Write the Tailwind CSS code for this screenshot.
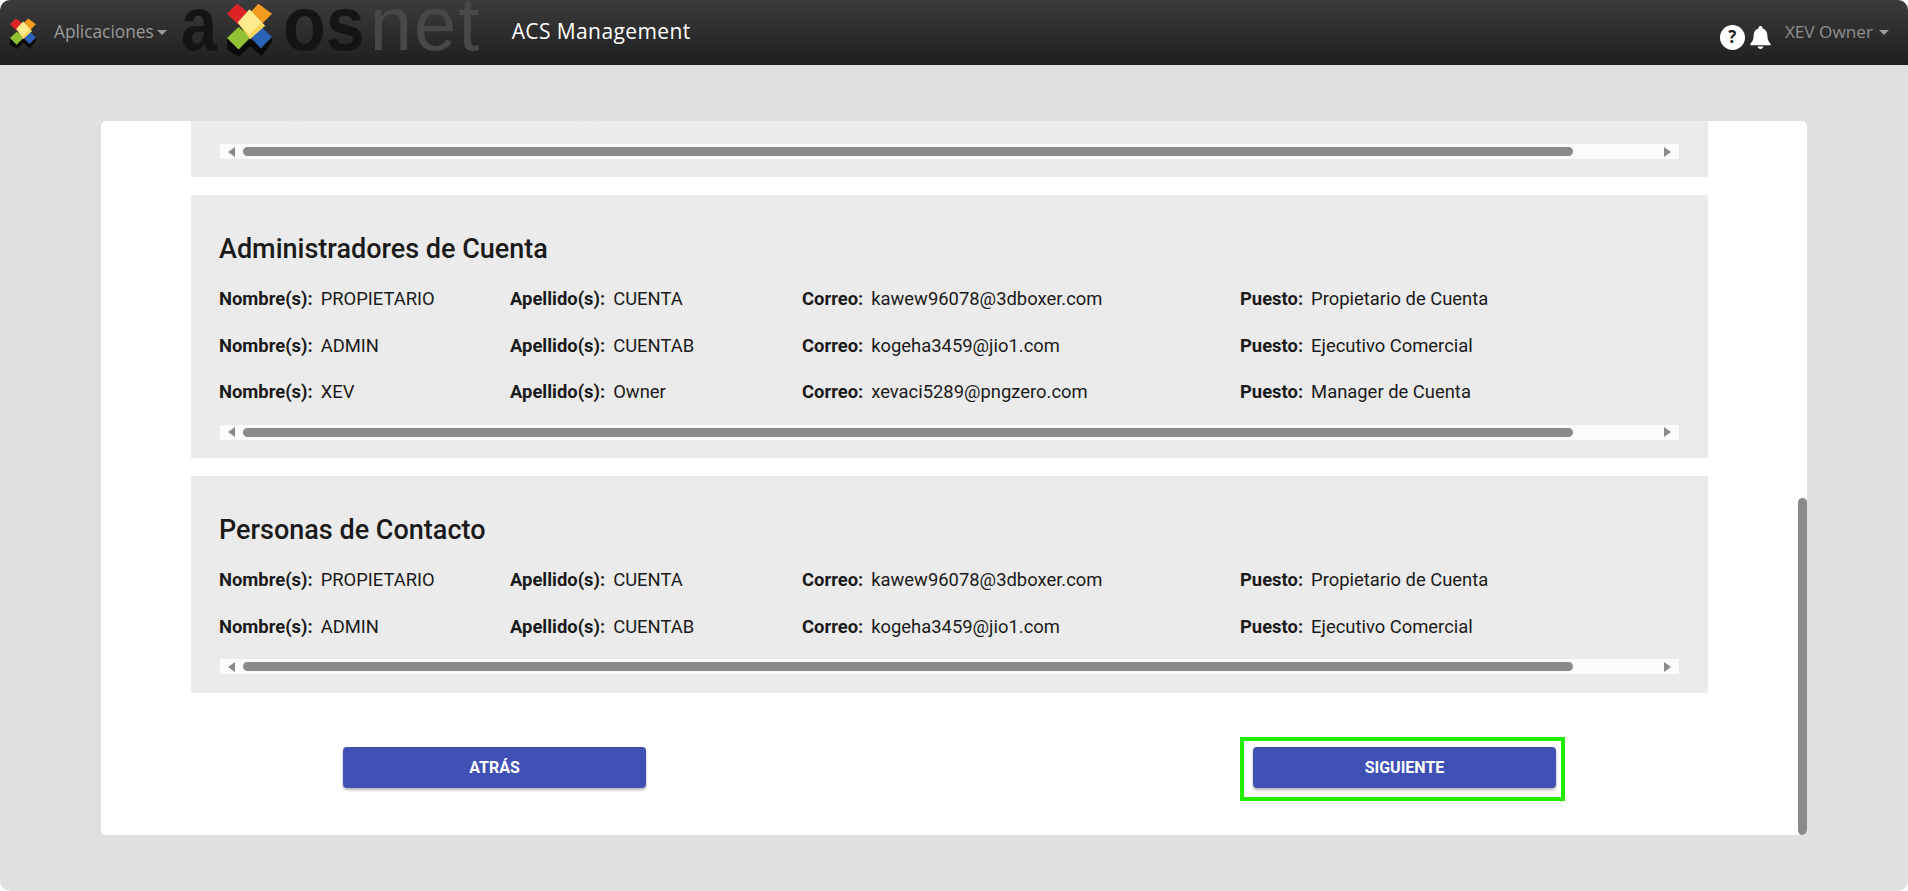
<!DOCTYPE html>
<html lang="es">
<head>
    <meta charset="UTF-8">
    <title>ACS Management</title>
    <script src="https://cdn.jsdelivr.net/npm/@tailwindcss/browser@4"></script>
</head>
<body class="h-screen overflow-hidden bg-white font-['Roboto',sans-serif] text-[18.4px] text-[#1a1a1a]">
<svg class="hidden">
    <symbol id="logo-x" viewBox="160 10 136 162">
        <path fill="#0a0a0a" d="M160 115L195 150L230 118L262 146L296 112V128L262 172V168L230 140L196 172L160 150Z"/>
        <path fill="#dc2427" d="M190 12L160 42L195 76L228 40Z"/>
        <path fill="#f49c1e" d="M255 12L228 40L262 76L296 42Z"/>
        <path fill="#8fc132" d="M195 82L160 115L195 150L232 112Z"/>
        <path fill="#2a62b8" d="M262 80L232 113L262 146L296 112Z"/>
        <path fill="#fdeb8e" d="M228 28L192 68L230 118L275 78Z"/>
        <path fill="#f6c93c" d="M230 118L275 78L262 70L228 104L200 78L192 68Z" opacity=".6"/>
    </symbol>
</svg>
<div class="h-full rounded-[10px] overflow-hidden bg-[#e0e0e0] flex flex-col">
    <header class="h-[65px] flex items-center bg-gradient-to-b from-[#3c3c3c] to-[#1f1f1f] font-['Open_Sans',sans-serif]">
        <svg class="w-[26px] h-[31px] ml-[10px] mt-[1px]"><use href="#logo-x"/></svg>
        <a class="ml-[18px] -mt-[1px] flex items-center text-[17.3px] text-[#9a9a9a]">Aplicaciones<span class="ml-[3px] border-x-[5px] border-x-transparent border-t-[5px] border-t-[#9a9a9a]"></span></a>
        <div class="relative ml-[14px] w-[301px] h-[65px] flex items-baseline leading-[47px] blur-[0.5px] font-['Liberation_Sans',sans-serif]">
            <span class="inline-block origin-left scale-x-[0.85] text-[76px] font-bold text-[#141414]">a</span>
            <span class="inline-block origin-left scale-x-[0.92] ml-[60px] text-[76px] font-bold text-[#141414]">os</span>
            <span class="-ml-[2px] text-[76px] tracking-[2px] text-[#484848]">net</span>
            <svg class="absolute left-[46px] top-[3px] w-[45px] h-[54px]"><use href="#logo-x"/></svg>
        </div>
        <span class="ml-[30px] -mt-[1px] text-[21px] tracking-[0.4px] text-white">ACS Management</span>
        <div class="ml-auto flex items-center pr-[19px]">
            <span class="mt-[9px] w-[25px] h-[25px] rounded-full bg-white flex items-center justify-center text-[17px] font-bold text-[#222222]">?</span>
            <svg class="ml-[5px] mt-[9px] w-[21px] h-[23px]" viewBox="0 0 21 23" fill="#ffffff"><path d="M10.5 0C9.3 0 8.5.9 8.5 2v.6C5.3 3.5 3.6 6.3 3.6 9.6c0 4.300-1.200 5.900-3.100 8.100-.5.6-.1 1.600.7 1.600h18.600c.8 0 1.200-1 .7-1.600-1.900-2.200-3.100-3.800-3.100-8.100 0-3.300-1.700-6.100-4.900-7V2c0-1.100-.8-2-2-2zM7.600 20.500c.2 1.400 1.400 2.500 2.900 2.500s2.700-1.100 2.900-2.500z"/></svg>
            <span class="ml-[14px] -mt-[1px] text-[17.2px] text-[#8f8f8f]">XEV Owner</span>
            <span class="ml-[6px] -mt-[1px] border-x-[5px] border-x-transparent border-t-[5px] border-t-[#9a9a9a]"></span>
        </div>
    </header>

    <main class="flex-1 pt-[56px] pl-[101px]">
        <div class="relative w-[1706px] h-[714px] rounded-[5px] bg-white overflow-hidden">
            <div class="ml-[90px] w-[1517px] h-[56px] bg-[#ebebeb] px-[29px] overflow-hidden">
                <div class="-mt-[33.5px] h-[46.5px] grid grid-cols-[290px_292px_438px_1fr] items-center">
                    <div class="-ml-px"><b class="mr-[8px]">Nombre(s):</b>PROPIETARIO</div>
                    <div><b class="mr-[8px]">Apellido(s):</b>CUENTA</div>
                </div>
                <div class="mt-[10px] h-[15px] bg-[#fbfbfb] flex items-center">
                    <span class="ml-[8px] border-y-[5px] border-y-transparent border-r-[7px] border-r-[#8a8a8a]"></span>
                    <span class="ml-[8px] w-[1330px] h-[9px] rounded-full bg-[#8a8a8a]"></span>
                    <span class="ml-auto mr-[8px] border-y-[5px] border-y-transparent border-l-[7px] border-l-[#8a8a8a]"></span>
                </div>
            </div>

            <section class="mt-[18px] ml-[90px] w-[1517px] h-[263px] bg-[#ebebeb] px-[29px]">
                <h2 class="-ml-px pt-[34px] h-[81px] text-[27px] font-medium leading-[40px]">Administradores de Cuenta</h2>
                <div class="h-[46.5px] grid grid-cols-[290px_292px_438px_1fr] items-center">
                    <div class="-ml-px"><b class="mr-[8px]">Nombre(s):</b>PROPIETARIO</div>
                    <div><b class="mr-[8px]">Apellido(s):</b>CUENTA</div>
                    <div><b class="mr-[8px]">Correo:</b>kawew96078@3dboxer.com</div>
                    <div><b class="mr-[8px]">Puesto:</b>Propietario de Cuenta</div>
                </div>
                <div class="h-[46.5px] grid grid-cols-[290px_292px_438px_1fr] items-center">
                    <div class="-ml-px"><b class="mr-[8px]">Nombre(s):</b>ADMIN</div>
                    <div><b class="mr-[8px]">Apellido(s):</b>CUENTAB</div>
                    <div><b class="mr-[8px]">Correo:</b>kogeha3459@jio1.com</div>
                    <div><b class="mr-[8px]">Puesto:</b>Ejecutivo Comercial</div>
                </div>
                <div class="h-[46.5px] grid grid-cols-[290px_292px_438px_1fr] items-center">
                    <div class="-ml-px"><b class="mr-[8px]">Nombre(s):</b>XEV</div>
                    <div><b class="mr-[8px]">Apellido(s):</b>Owner</div>
                    <div><b class="mr-[8px]">Correo:</b>xevaci5289@pngzero.com</div>
                    <div><b class="mr-[8px]">Puesto:</b>Manager de Cuenta</div>
                </div>
                <div class="mt-[9px] h-[15px] bg-[#fbfbfb] flex items-center">
                    <span class="ml-[8px] border-y-[5px] border-y-transparent border-r-[7px] border-r-[#8a8a8a]"></span>
                    <span class="ml-[8px] w-[1330px] h-[9px] rounded-full bg-[#8a8a8a]"></span>
                    <span class="ml-auto mr-[8px] border-y-[5px] border-y-transparent border-l-[7px] border-l-[#8a8a8a]"></span>
                </div>
            </section>

            <section class="mt-[18px] ml-[90px] w-[1517px] h-[217px] bg-[#ebebeb] px-[29px]">
                <h2 class="-ml-px pt-[34px] h-[81px] text-[27px] font-medium leading-[40px]">Personas de Contacto</h2>
                <div class="h-[46.5px] grid grid-cols-[290px_292px_438px_1fr] items-center">
                    <div class="-ml-px"><b class="mr-[8px]">Nombre(s):</b>PROPIETARIO</div>
                    <div><b class="mr-[8px]">Apellido(s):</b>CUENTA</div>
                    <div><b class="mr-[8px]">Correo:</b>kawew96078@3dboxer.com</div>
                    <div><b class="mr-[8px]">Puesto:</b>Propietario de Cuenta</div>
                </div>
                <div class="h-[46.5px] grid grid-cols-[290px_292px_438px_1fr] items-center">
                    <div class="-ml-px"><b class="mr-[8px]">Nombre(s):</b>ADMIN</div>
                    <div><b class="mr-[8px]">Apellido(s):</b>CUENTAB</div>
                    <div><b class="mr-[8px]">Correo:</b>kogeha3459@jio1.com</div>
                    <div><b class="mr-[8px]">Puesto:</b>Ejecutivo Comercial</div>
                </div>
                <div class="mt-[9px] h-[15px] bg-[#fbfbfb] flex items-center">
                    <span class="ml-[8px] border-y-[5px] border-y-transparent border-r-[7px] border-r-[#8a8a8a]"></span>
                    <span class="ml-[8px] w-[1330px] h-[9px] rounded-full bg-[#8a8a8a]"></span>
                    <span class="ml-auto mr-[8px] border-y-[5px] border-y-transparent border-l-[7px] border-l-[#8a8a8a]"></span>
                </div>
            </section>

            <div class="mt-[44px] flex items-start">
                <button class="mt-[10px] ml-[242px] w-[303px] h-[41px] rounded-[4px] bg-[#3f51b5] text-white text-[16px] font-bold shadow-[0_2px_3px_rgba(0,0,0,0.3)]">ATRÁS</button>
                <div class="ml-[594px] border-4 border-[#22ee00] pl-[9px] pr-[5px] pt-[6px] pb-[9px]">
                    <button class="block w-[303px] h-[41px] rounded-[4px] bg-[#3f51b5] text-white text-[16px] font-bold shadow-[0_2px_3px_rgba(0,0,0,0.3)]">SIGUIENTE</button>
                </div>
            </div>

            <span class="absolute right-0 bottom-0 w-[9px] h-[337px] rounded-full bg-[#8a8a8a]"></span>
        </div>
    </main>
</div>
</body>
</html>
